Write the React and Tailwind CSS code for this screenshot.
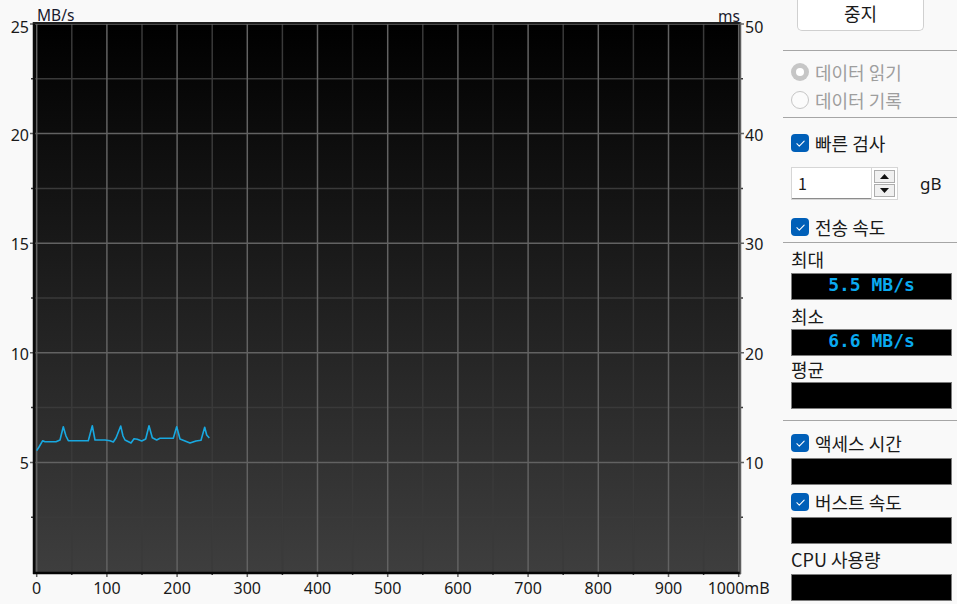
import React from 'react';

// chart geometry (px)
const PX0 = 36.7;   // x of 0 mB
const PXS = 70.2;   // px per 100 mB
const PY0 = 24;     // y of 25 MB/s
const PYS = 109.6;  // px per 5 MB/s

const speed = [
  [36.7, 450.7], [39, 447], [42.7, 440.7], [45, 441.7], [56, 441.7], [60, 440], [63.3, 426.7], [66, 436],
  [68.3, 440.7], [88.3, 440.7], [92.3, 425.7], [95, 440], [105, 440], [110, 440.7], [113.3, 442], [116, 438],
  [120.7, 426], [123, 436], [125, 440], [131, 443], [134, 438.7], [137.3, 439.3], [141.7, 441], [145.7, 439],
  [149, 425.7], [152.3, 437.7], [156.7, 440], [160, 438.3], [173.3, 438.3], [176.7, 426.7], [180, 439],
  [185, 441], [190, 443], [196, 441], [201, 440.3], [204.7, 427.3], [206.7, 435], [209.3, 438],
];

const leftLabels = ['25', '20', '15', '10', '5'];
const rightLabels = ['50', '40', '30', '20', '10'];

function Chart() {
  const vMajor = Array.from({ length: 11 }, (_, i) => PX0 + i * PXS);
  const vMinor = Array.from({ length: 10 }, (_, i) => PX0 + i * PXS + PXS / 2);
  const hMajor = Array.from({ length: 5 }, (_, i) => PY0 + i * PYS);
  const hMinor = Array.from({ length: 5 }, (_, i) => PY0 + i * PYS + PYS / 2);

  return (
    <svg width="783" height="604" className="shrink-0" style={{ fontFamily: '"Noto Sans", "Liberation Sans", sans-serif' }}>
      <defs>
        <linearGradient id="plotbg" x1="0" y1="0" x2="0" y2="1">
          <stop offset="0" stopColor="#000000" />
          <stop offset="1" stopColor="#3e3e3e" />
        </linearGradient>
      </defs>

      <rect x="35" y="24" width="705" height="548" fill="url(#plotbg)" />

      {/* minor grid */}
      {vMinor.map((x) => (
        <line key={'vm' + x} x1={x} y1="24" x2={x} y2="575" stroke="#3a3a3a" strokeWidth="1.5" />
      ))}
      {hMinor.map((y) => (
        <line key={'hm' + y} x1="31" y1={y} x2="743" y2={y} stroke="#3a3a3a" strokeWidth="1.5" />
      ))}

      {/* major grid */}
      {vMajor.map((x) => (
        <line key={'v' + x} x1={x} y1="24" x2={x} y2="577" stroke="#626262" strokeWidth="1.5" />
      ))}
      {hMajor.map((y) => (
        <line key={'h' + y} x1="30" y1={y} x2="744" y2={y} stroke="#626262" strokeWidth="1.5" />
      ))}

      {/* frame */}
      <line x1="34" y1="22" x2="34" y2="574" stroke="#0a0a0a" strokeWidth="2.5" />
      <line x1="33" y1="23" x2="741" y2="23" stroke="#1e1e1e" strokeWidth="2" />
      <line x1="33" y1="573" x2="741" y2="573" stroke="#050505" strokeWidth="2.5" />
      <line x1="740.5" y1="22" x2="740.5" y2="574" stroke="#5e5e5e" strokeWidth="1.5" />

      {/* transfer speed */}
      <polyline
        points={speed.map((p) => p.join(',')).join(' ')}
        fill="none"
        stroke="#18a8e0"
        strokeWidth="1.6"
        strokeLinejoin="round"
      />

      {/* axis labels */}
      <text x="37" y="21" fontSize="15.5" fill="#1a1a2e">MB/s</text>
      <text x="718" y="22" fontSize="15.5" fill="#1a1a2e">ms</text>
      {leftLabels.map((t, i) => (
        <text key={'l' + t} x="29" y={PY0 + i * PYS + (i === 0 ? 9 : 7)} fontSize="16" textAnchor="end" fill="#1a1a1a">
          {t}
        </text>
      ))}
      {rightLabels.map((t, i) => (
        <text key={'r' + t} x="745" y={PY0 + i * PYS + (i === 0 ? 9 : 7)} fontSize="16" fill="#1a1a1a">
          {t}
        </text>
      ))}
      {vMajor.map((x, i) => (
        <text key={'b' + i} x={x} y="594" fontSize="16" textAnchor="middle" fill="#1a1a1a">
          {i === 10 ? '1000mB' : String(i * 100)}
        </text>
      ))}
    </svg>
  );
}

function CheckBox() {
  return (
    <span className="flex h-[18px] w-[18px] shrink-0 items-center justify-center rounded-[4px] bg-[#005fb8]">
      <svg viewBox="0 0 16 16" className="h-[13px] w-[13px]">
        <path d="M3.5 8.3l3 3 6-6.3" fill="none" stroke="white" strokeWidth="1.3" strokeLinecap="round" strokeLinejoin="round" />
      </svg>
    </span>
  );
}

function Radio({ checked }) {
  return checked ? (
    <span className="flex h-[18px] w-[18px] shrink-0 items-center justify-center rounded-full bg-[#c6c6c6]">
      <span className="h-[8px] w-[8px] rounded-full bg-white" />
    </span>
  ) : (
    <span className="h-[18px] w-[18px] shrink-0 rounded-full border border-[#c6c6c6] bg-[#fbfbfb]" />
  );
}

function ValueBox({ value, className = '' }) {
  return (
    <div
      className={`h-[27px] w-[161px] border border-[#7c7c7c] bg-black pt-[1px] text-center text-[18px] font-bold leading-[20px] text-[#0aaaf0] ${className}`}
      style={{ fontFamily: '"DejaVu Sans Mono", "Liberation Mono", monospace' }}
    >
      {value}
    </div>
  );
}

function Separator({ className = '' }) {
  return <div className={`h-px w-full bg-[#a6a6a6] ${className}`} />;
}

export default function App() {
  return (
    <div
      className="flex h-[604px] w-[957px] overflow-hidden bg-[#f9f9f9] text-[#1a1a1a]"
      style={{ fontFamily: '"Noto Sans", "Noto Sans CJK KR", sans-serif' }}
    >
      <Chart />

      {/* settings panel */}
      <div className="flex w-[174px] flex-col text-[18px]" style={{ fontFamily: '"Noto Sans CJK KR", "Noto Sans", sans-serif' }}>
        <button className="ml-[14px] flex h-[31px] w-[127px] items-center justify-center rounded-b-[5px] border border-t-0 border-[#d0d0d0] bg-white pb-[3px] text-[18px]">
          중지
        </button>

        <Separator className="mt-[19px]" />

        <div className="ml-[8px] mt-[7px] flex h-[28px] items-center gap-[6px] text-[#9e9e9e]">
          <Radio checked />
          <span>데이터 읽기</span>
        </div>
        <div className="ml-[8px] flex h-[28px] items-center gap-[6px] text-[#9e9e9e]">
          <Radio />
          <span>데이터 기록</span>
        </div>

        <Separator className="mt-[3px]" />

        <div className="ml-[8px] mt-[11px] flex h-[28px] items-center gap-[6px]">
          <CheckBox />
          <span>빠른 검사</span>
        </div>

        <div className="ml-[8px] mt-[10px] flex items-center">
          <div className="flex h-[33px] w-[107px] border border-[#d6d6d6] bg-white">
            <div className="flex flex-1 items-center border-b border-[#8c8c8c] pl-[6px] text-[16px]">1</div>
            <div className="flex w-[26px] flex-col gap-[1px] border-l border-[#d6d6d6] p-[2px]">
              <div className="flex flex-1 items-center justify-center border border-[#adadad] bg-[#f0f0f0]">
                <svg width="9" height="5" viewBox="0 0 9 5"><path d="M0 5L4.5 0L9 5Z" fill="#111" /></svg>
              </div>
              <div className="flex flex-1 items-center justify-center border border-[#adadad] bg-[#f0f0f0]">
                <svg width="9" height="5" viewBox="0 0 9 5"><path d="M0 0L4.5 5L9 0Z" fill="#111" /></svg>
              </div>
            </div>
          </div>
          <span className="ml-[22px] text-[17px]" style={{ fontFamily: '"Noto Sans", sans-serif' }}>gB</span>
        </div>

        <div className="ml-[8px] mt-[13px] flex h-[28px] items-center gap-[6px]">
          <CheckBox />
          <span>전송 속도</span>
        </div>

        <Separator className="mt-[1px]" />

        <div className="ml-[8px] mt-[4px] flex h-[24px] items-center">최대</div>
        <ValueBox className="ml-[8px] mt-[2px]" value="5.5 MB/s" />
        <div className="ml-[8px] mt-[4px] flex h-[24px] items-center">최소</div>
        <ValueBox className="ml-[8px] mt-[1px]" value="6.6 MB/s" />
        <div className="ml-[8px] flex h-[26px] items-center">평균</div>
        <ValueBox className="ml-[8px]" value="" />

        <Separator className="mt-[11px]" />

        <div className="ml-[8px] mt-[10px] flex h-[24px] items-center gap-[6px]">
          <CheckBox />
          <span>액세스 시간</span>
        </div>
        <ValueBox className="ml-[8px] mt-[3px]" value="" />
        <div className="ml-[8px] mt-[5px] flex h-[24px] items-center gap-[6px]">
          <CheckBox />
          <span>버스트 속도</span>
        </div>
        <ValueBox className="ml-[8px] mt-[3px]" value="" />
        <div className="ml-[8px] mt-[3px] flex h-[24px] items-center">CPU 사용량</div>
        <ValueBox className="ml-[8px] mt-[3px]" value="" />
      </div>
    </div>
  );
}
